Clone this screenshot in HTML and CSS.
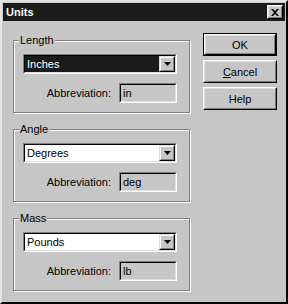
FILE: index.html
```html
<!DOCTYPE html>
<html lang="en">
<head>
<meta charset="UTF-8" />
<title>Units</title>
<link rel="stylesheet" href="styles.css">
</head>
<body>
  <div class="window">
    <div class="titlebar">
      <span class="title">Units</span>
      <span class="close">
        <span class="close-inner">
          <svg width="8" height="7" viewBox="0 0 8 7"><path d="M0 0h2l2 2 2-2h2L5 3.5 8 7H6L4 5 2 7H0l3-3.5z" fill="#000"/></svg>
        </span>
      </span>
    </div>

    <div class="content">
      <div class="groups">
        <!-- LENGTH -->
        <fieldset class="group">
          <legend>Length</legend>
          <div class="combo">
            <div class="combo-inner">
              <span class="combo-text selected">Inches</span>
              <span class="combo-btn"><span class="raised"><svg width="7" height="4" viewBox="0 0 7 4"><path d="M0 0h7L3.5 4z" fill="#000"/></svg></span></span>
            </div>
          </div>
          <div class="abbr-row">
            <span class="abbr-label">Abbreviation:</span>
            <div class="field"><div class="field-inner">in</div></div>
          </div>
        </fieldset>

        <!-- ANGLE -->
        <fieldset class="group">
          <legend>Angle</legend>
          <div class="combo">
            <div class="combo-inner">
              <span class="combo-text">Degrees</span>
              <span class="combo-btn"><span class="raised"><svg width="7" height="4" viewBox="0 0 7 4"><path d="M0 0h7L3.5 4z" fill="#000"/></svg></span></span>
            </div>
          </div>
          <div class="abbr-row">
            <span class="abbr-label">Abbreviation:</span>
            <div class="field"><div class="field-inner">deg</div></div>
          </div>
        </fieldset>

        <!-- MASS -->
        <fieldset class="group">
          <legend>Mass</legend>
          <div class="combo">
            <div class="combo-inner">
              <span class="combo-text">Pounds</span>
              <span class="combo-btn"><span class="raised"><svg width="7" height="4" viewBox="0 0 7 4"><path d="M0 0h7L3.5 4z" fill="#000"/></svg></span></span>
            </div>
          </div>
          <div class="abbr-row">
            <span class="abbr-label">Abbreviation:</span>
            <div class="field"><div class="field-inner">lb</div></div>
          </div>
        </fieldset>
      </div>

      <div class="buttons">
        <div class="button default"><span class="btn-outer"><span class="btn-inner">OK</span></span></div>
        <div class="button"><span class="btn-outer"><span class="btn-inner"><u>C</u>ancel</span></span></div>
        <div class="button"><span class="btn-outer"><span class="btn-inner">Help</span></span></div>
      </div>
    </div>
  </div>
</body>
</html>
```

FILE: styles.css
```css
html, body {
  margin: 0;
  padding: 0;
  background: #c6c6c6;
  font-family: 'Liberation Sans', Arial, sans-serif;
  font-size: 11px;
  color: #000;
}
.window {
  width: 288px;
  height: 304px;
  box-sizing: border-box;
  padding: 1px;
  border: 2px solid;
  border-color: #e4e4e4 #000 #000 #e4e4e4;
  background: #c6c6c6;
  overflow: hidden;
}
.titlebar {
  height: 18px;
  background: #1b1b1b;
  display: flex;
  align-items: center;
  justify-content: space-between;
  padding: 0 2px 0 3px;
}
.title {
  color: #fff;
  font-weight: bold;
  font-size: 11px;
}
.close {
  width: 16px;
  height: 14px;
  box-sizing: border-box;
  border: 1px solid;
  border-color: #fff #000 #000 #fff;
  background: #c6c6c6;
  display: flex;
}
.close-inner {
  flex: 1;
  border: 1px solid;
  border-color: #dfdfdf #808080 #808080 #dfdfdf;
  display: flex;
  align-items: center;
  justify-content: center;
}
.content {
  display: flex;
  gap: 13px;
  padding: 12px 0 0 10px;
}
.groups {
  width: 177px;
}
.group {
  margin: 0 0 9px 0;
  padding: 7px 12px 9px 9px;
  border: 1px solid #808080;
  box-shadow: inset 1px 1px 0 #fff, 1px 1px 0 #fff;
  min-width: 0;
}
.group legend {
  padding: 0 1px;
  margin-left: -4px;
  line-height: 14px;
  background: #c6c6c6;
}
.combo {
  height: 20px;
  box-sizing: border-box;
  border: 1px solid;
  border-color: #808080 #fff #fff #808080;
}
.combo-inner {
  height: 18px;
  box-sizing: border-box;
  border: 1px solid;
  border-color: #000 #dfdfdf #dfdfdf #000;
  background: #fff;
  display: flex;
}
.combo-text {
  flex: 1;
  line-height: 16px;
  padding-left: 2px;
}
.combo-text.selected {
  background: #1b1b1b;
  color: #fff;
}
.combo-btn {
  width: 16px;
  height: 16px;
  box-sizing: border-box;
  border: 1px solid;
  border-color: #dfdfdf #000 #000 #dfdfdf;
  background: #c6c6c6;
  display: flex;
}
.raised {
  flex: 1;
  border: 1px solid;
  border-color: #fff #808080 #808080 #fff;
  display: flex;
  align-items: center;
  justify-content: center;
}
.abbr-row {
  display: flex;
  justify-content: flex-end;
  align-items: center;
  gap: 8px;
  margin-top: 9px;
}
.field {
  width: 58px;
  height: 20px;
  box-sizing: border-box;
  border: 1px solid;
  border-color: #808080 #fff #fff #808080;
}
.field-inner {
  height: 18px;
  box-sizing: border-box;
  border: 1px solid;
  border-color: #000 #dfdfdf #dfdfdf #000;
  line-height: 16px;
  padding-left: 2px;
}
.buttons {
  width: 74px;
  display: flex;
  flex-direction: column;
  gap: 4px;
}
.button {
  height: 23px;
  box-sizing: border-box;
  display: flex;
}
.button.default {
  border: 1px solid #000;
}
.btn-outer {
  flex: 1;
  border: 1px solid;
  border-color: #fff #000 #000 #fff;
  display: flex;
}
.btn-inner {
  flex: 1;
  border: 1px solid;
  border-color: #dfdfdf #808080 #808080 #dfdfdf;
  display: flex;
  align-items: center;
  justify-content: center;
}
```
